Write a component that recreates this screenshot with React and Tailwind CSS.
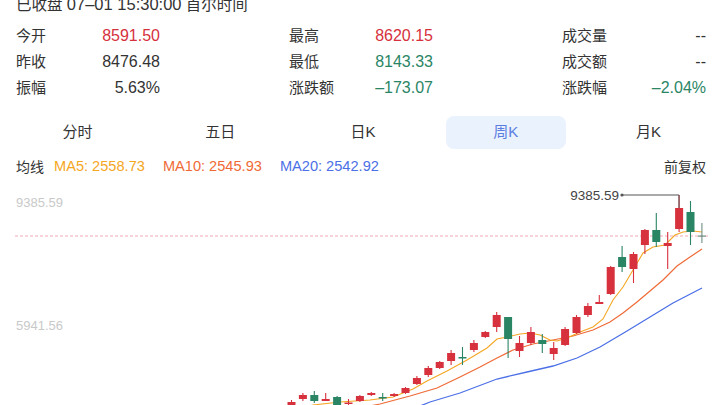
import React from "react";

const RED = "#d6313d";
const GREEN = "#2a8565";

const stats = [
  [
    ["今开", "8591.50", "text-[#d6313d]"],
    ["昨收", "8476.48", "text-[#333333]"],
    ["振幅", "5.63%", "text-[#333333]"],
  ],
  [
    ["最高", "8620.15", "text-[#d6313d]"],
    ["最低", "8143.33", "text-[#2a8565]"],
    ["涨跌额", "–173.07", "text-[#2a8565]"],
  ],
  [
    ["成交量", "--", "text-[#333333]"],
    ["成交额", "--", "text-[#333333]"],
    ["涨跌幅", "–2.04%", "text-[#2a8565]"],
  ],
];

const tabs = ["分时", "五日", "日K", "周K", "月K"];

// [bodyTop, bodyBottom, high, low, up?]
const candles = [
  [402, 410, 400, 412, 1],
  [395, 399, 393, 401, 1],
  [395, 401, 391, 403, 0],
  [399, 401, 393, 401, 1],
  [397, 407, 396, 408, 0],
  [402.5, 404, 399, 406, 1],
  [396, 401, 395, 402, 1],
  [393, 395, 392, 396, 1],
  [397, 398.5, 393, 401, 0],
  [394, 396, 393, 397, 1],
  [388, 393, 387, 394, 1],
  [378, 384, 376, 385, 1],
  [368, 375, 366, 377, 1],
  [362, 368, 361, 369, 1],
  [353, 361, 350, 365, 1],
  [357, 358.5, 347, 365, 0],
  [343, 350, 340, 352, 1],
  [332, 337, 331, 338, 1],
  [315, 327, 312, 332, 1],
  [317, 339, 317, 358, 0],
  [343, 351, 336, 357, 1],
  [332, 343, 327, 345, 1],
  [340, 344, 334, 353, 0],
  [348, 354, 342, 360, 1],
  [329, 345, 327, 346, 1],
  [317, 333, 315, 334, 1],
  [306, 315, 303, 317, 1],
  [302, 304, 295, 304, 1],
  [267, 294, 266, 295, 1],
  [257, 267, 246, 272, 0],
  [254, 269, 252, 283, 1],
  [230, 245, 229, 254, 1],
  [230, 242, 213, 247, 0],
  [243, 246, 232, 269, 1],
  [208, 229, 195, 232, 1],
  [212, 232, 201, 245, 0],
  [235.5, 236.5, 223, 243, 2],
];

const ma5 = [
  [300, 410], [313, 405], [340, 402], [370, 400], [393, 397], [403, 393], [413, 389],
  [427, 381], [447, 371], [467, 360], [487, 348], [497, 339], [507, 337], [520, 334],
  [530, 333], [540, 335], [550, 340], [557, 341], [567, 338], [580, 332], [593, 327],
  [603, 319], [613, 300], [623, 287], [633, 270], [643, 253], [653, 247], [665, 245],
  [675, 235], [683, 232], [693, 231], [702, 232],
];

const ma10 = [
  [350, 410], [380, 404], [410, 396], [437, 388], [460, 377], [480, 367], [497, 358],
  [513, 350], [533, 344], [553, 340], [573, 336], [593, 330], [610, 322], [623, 313],
  [637, 302], [650, 291], [663, 280], [677, 266], [690, 257], [702, 249],
];

const ma20 = [
  [410, 410], [430, 402], [460, 393], [497, 379], [527, 372], [553, 366], [577, 358],
  [600, 347], [627, 331], [650, 317], [673, 303], [702, 288],
];

const pts = (arr) => arr.map(([x, y]) => `${x},${y}`).join(" ");

function KChart() {
  return (
    <svg className="block" width="720" height="228" viewBox="0 177 720 228">
      <text x="16" y="206.5" fontSize="13" fill="#c9c9c9" fontFamily="Liberation Sans, sans-serif">
        9385.59
      </text>
      <text x="16" y="329.5" fontSize="13" fill="#c9c9c9" fontFamily="Liberation Sans, sans-serif">
        5941.56
      </text>
      <line x1="15" y1="236" x2="708" y2="236" stroke="#f2a9b6" strokeWidth="1" strokeDasharray="3 2" />

      <polyline points={pts(ma20)} fill="none" stroke="#4c70e6" strokeWidth="1.3" />
      <polyline points={pts(ma10)} fill="none" stroke="#ef6a36" strokeWidth="1.2" />
      <polyline points={pts(ma5)} fill="none" stroke="#f5a623" strokeWidth="1.1" />

      {candles.map(([top, bottom, high, low, up], i) => {
        const cx = 291.5 + 11.4 * i;
        const color = up === 1 ? RED : up === 0 ? GREEN : "#6f8f84";
        return (
          <g key={i}>
            <line x1={cx} y1={high} x2={cx} y2={low} stroke={color} strokeWidth="1.1" />
            <rect x={cx - 4} y={top} width="8" height={Math.max(bottom - top, 1.2)} fill={color} />
          </g>
        );
      })}

      <polyline points="622,195 679,195 679,208" fill="none" stroke="#555555" strokeWidth="1" />
      <circle cx="622" cy="195" r="1.6" fill="#555555" />
      <text
        x="619"
        y="199.5"
        textAnchor="end"
        fontSize="13.5"
        fill="#444444"
        fontFamily="Liberation Sans, sans-serif"
      >
        9385.59
      </text>
    </svg>
  );
}

export default function App() {
  return (
    <div
      className="w-[720px] h-[405px] overflow-hidden bg-white text-[#333333]"
      style={{ fontFamily: '"Liberation Sans", "Noto Sans CJK SC", sans-serif' }}
    >
      {/* status line sits partly above the fold */}
      <div className="-mt-[6px] h-[20px] pl-4 text-[15.5px] leading-[20px] text-[#333333]">
        已收盘 <span className="text-[16.5px]">07–01 15:30:00</span> 首尔时间
      </div>

      <div className="mt-[9px] flex justify-between pl-4 pr-[14px] text-[15px]">
        {stats.map((col, ci) => (
          <div key={ci} className="flex w-[144px] flex-col">
            {col.map(([label, value, color]) => (
              <div key={label} className="flex h-[26px] items-center justify-between">
                <span>{label}</span>
                <span className={`text-[16px] ${color}`}>{value}</span>
              </div>
            ))}
          </div>
        ))}
      </div>

      <div className="mt-[15px] grid grid-cols-5 pl-[6px] text-[15px]">
        {tabs.map((t) => (
          <div key={t} className="flex justify-center">
            <div
              className={
                t === "周K"
                  ? "flex h-[33px] w-[120px] items-center justify-center rounded-[8px] bg-[#eaf2fd] text-[#5b7ee0]"
                  : "flex h-[33px] w-[120px] items-center justify-center text-[#333333]"
              }
            >
              {t}
            </div>
          </div>
        ))}
      </div>

      <div className="mt-[8px] flex h-[20px] items-center pl-4 pr-[14px] text-[14px]">
        <span className="mr-[10px]">均线</span>
        <span className="mr-[18px] text-[14.6px] text-[#f5a623]">MA5: 2558.73</span>
        <span className="mr-[18px] text-[14.6px] text-[#ef6a36]">MA10: 2545.93</span>
        <span className="text-[14.6px] text-[#4c70e6]">MA20: 2542.92</span>
        <span className="ml-auto">前复权</span>
      </div>

      <KChart />
    </div>
  );
}
